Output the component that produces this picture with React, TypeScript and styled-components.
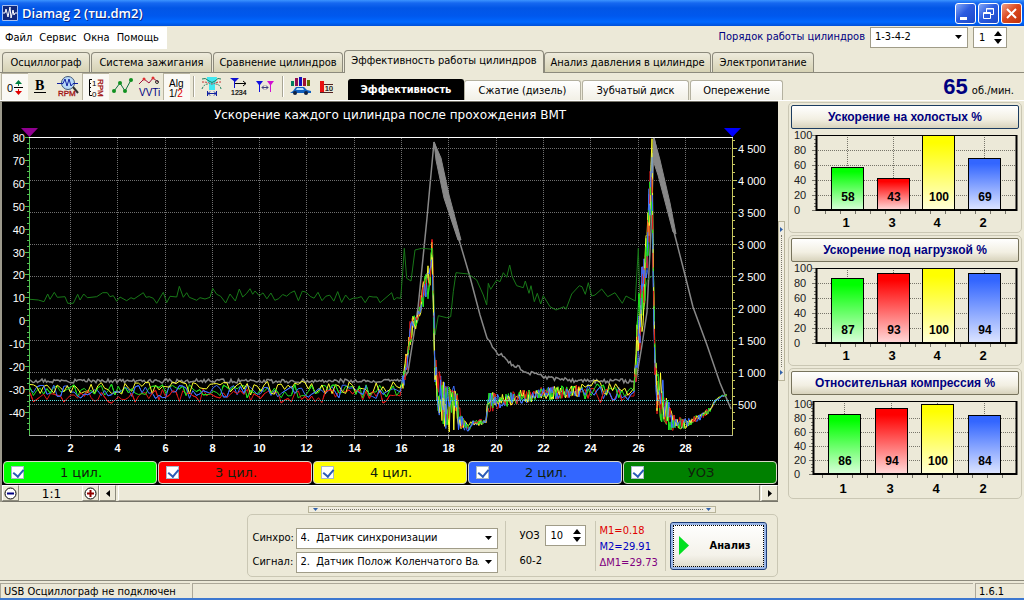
import React from 'react';
import styled, { createGlobalStyle, css } from 'styled-components';

const UI = "'DejaVu Sans Condensed', 'DejaVu Sans', sans-serif";
const WIDE = "'DejaVu Sans', sans-serif";
const ARIAL = "'Liberation Sans', Arial, sans-serif";
const FACE = '#ece9d8';

const GlobalStyle = createGlobalStyle`
  * { box-sizing: border-box; }
  body { margin: 0; background: ${FACE}; font: 11px/14px ${UI}; color: #000; }
  button, input, select { font: inherit; color: inherit; margin: 0; border-radius: 0; }
  svg { display: block; }
`;

const Window = styled.div`
  min-height: 100vh;
  display: flex;
  flex-direction: column;
`;

/* ---------- title and menu ---------- */

const TitleBar = styled.header`
  height: 26px;
  display: flex;
  align-items: center;
  gap: 4px;
  padding: 0 2px;
  background: linear-gradient(#3c94ff 0, #1668f0 3px, #0256e6 8px, #0058ee 16px, #0068ff 22px, #0050d8 26px);
`;

const Title = styled.h1`
  flex: 1;
  margin: 0;
  color: #fff;
  font: 600 13px/18px 'Open Sans', sans-serif;
  text-shadow: 1px 1px 0 #0a2a8c;
`;

const WindowButton = styled.button<{ $close?: boolean }>`
  width: 21px;
  height: 21px;
  padding: 0;
  border: 1px solid #fff;
  border-radius: 3px;
  background: ${p => (p.$close
    ? 'linear-gradient(135deg, #f0a088, #dc4a20 45%, #c03008)'
    : 'linear-gradient(135deg, #84a8f8, #2c5ce0 45%, #1c48c8)')};
`;

const WindowButtons = styled.div`
  display: flex;
  gap: 2px;
`;

const MenuRow = styled.div`
  height: 24px;
  display: flex;
  justify-content: space-between;
`;

const Menu = styled.nav`
  display: flex;
  align-items: center;
  gap: 7px;
  height: 22px;
  margin-top: 1px;
  padding: 0 8px 0 5px;
  background: #fff;
`;

const MenuItem = styled.button`
  padding: 0;
  border: 0;
  background: none;
`;

const OrderBox = styled.div`
  display: flex;
  align-items: center;
  gap: 5px;
  padding: 0 17px 2px 0;
`;

const OrderLabel = styled.label`
  color: #000080;
`;

const SelectBox = styled.div<{ $width: number }>`
  position: relative;
  width: ${p => p.$width}px;
  height: 21px;
  svg { position: absolute; right: 6px; top: 8px; pointer-events: none; }
`;

const Select = styled.select`
  appearance: none;
  width: 100%;
  height: 100%;
  padding: 0 18px 0 4px;
  border: 1px solid #a09c88;
  background: #fff;
  white-space: pre;
`;

const Spinner = styled.div<{ $width: number }>`
  display: flex;
  align-items: center;
  width: ${p => p.$width}px;
  height: 21px;
  padding-right: 4px;
  border: 1px solid #a09c88;
  background: #fff;
`;

const SpinInput = styled.input`
  flex: 1;
  min-width: 0;
  height: 17px;
  padding: 0 0 0 5px;
  border: 0;
  background: none;
`;

const SpinArrows = styled.div`
  display: flex;
  flex-direction: column;
  gap: 3px;
`;

const SpinButton = styled.button`
  padding: 0;
  border: 0;
  background: none;
`;

/* ---------- tabs and toolbar ---------- */

const TabRow = styled.div`
  height: 23px;
  display: flex;
  align-items: flex-end;
  padding-left: 2px;
  border-bottom: 1px solid #8c8a7c;
`;

const Tab = styled.button<{ $width: number; $active?: boolean }>`
  flex: 0 1 ${p => p.$width}px;
  height: 20px;
  margin-right: 1px;
  padding: 0;
  border: 1px solid #8c8a7c;
  border-bottom: 0;
  border-radius: 4px 4px 0 0;
  background: linear-gradient(#eeebdc, #d6d2b4);
  white-space: nowrap;
  ${p => p.$active && css`
    height: 23px;
    margin: 0 0 -1px;
    padding-bottom: 2px;
    background: ${FACE};
  `}
`;

const ToolRow = styled.div`
  height: 28px;
  display: flex;
  border-bottom: 1px solid #fff;
`;

const Tools = styled.div`
  display: flex;
  padding-left: 1px;
`;

const ToolButton = styled.button<{ $pressed?: boolean }>`
  width: 27px;
  height: 27px;
  padding: 1px;
  border: 0;
  background: ${p => (p.$pressed ? '#faf9f4' : 'none')};
  box-shadow: ${p => (p.$pressed ? 'inset 1px 1px 0 #b8b4a0' : 'none')};
`;

const ToolSeparator = styled.i`
  width: 2px;
  margin: 3px;
  border-left: 1px solid #a8a594;
  border-right: 1px solid #fff;
`;

const SubTabs = styled.div`
  display: flex;
  align-items: flex-end;
  margin-left: 7px;
`;

const SubTab = styled.button<{ $width: number; $active?: boolean }>`
  width: ${p => p.$width}px;
  height: 20px;
  margin-right: 1px;
  padding: 0;
  border: 1px solid #b4b1a0;
  border-bottom: 0;
  border-radius: 3px 3px 0 0;
  background: linear-gradient(#fff, #f2f0e6);
  ${p => p.$active && css`
    height: 21px;
    margin-right: 0;
    border-color: #000;
    background: #000;
    color: #fff;
    font-weight: bold;
  `}
`;

const Speed = styled.p`
  flex: 1;
  margin: 0;
  padding-right: 10px;
  text-align: right;
  line-height: 27px;
  b { font: bold 22px/27px ${ARIAL}; color: #000080; margin-right: 4px; }
`;

/* ---------- main area ---------- */

const Main = styled.main`
  flex: 1;
  display: flex;
  align-items: flex-start;
  padding: 0 2px 0 0;
`;

const Scope = styled.section`
  flex: 1;
  min-width: 0;
  border-top: 1px solid #77756a;
  border-left: 2px solid #9c9a8c;
`;

const Screen = styled.div`
  background: #000;
  padding-bottom: 1px;
`;

const Plot = styled.svg`
  width: 100%;
  height: auto;
`;

const Legend = styled.div`
  display: grid;
  grid-template-columns: repeat(5, 1fr);
  gap: 1px;
  padding: 2px 1px 0;
`;

const LegendItem = styled.label<{ $color: string }>`
  display: flex;
  align-items: center;
  height: 23px;
  padding: 0 18px 0 7px;
  border: 1px solid #d8d8c8;
  border-radius: 4px;
  background: ${p => p.$color};
  font: 13px/16px ${WIDE};
  color: #10200c;
  span { flex: 1; text-align: center; }
`;

const Check = styled.input`
  appearance: none;
  width: 13px;
  height: 13px;
  border: 1px solid #a8b8c8;
  background: #fff;
  &:checked::after {
    content: '';
    display: block;
    width: 5px;
    height: 8px;
    margin: 0 0 0 3px;
    border: solid #2c5cb8;
    border-width: 0 2px 2px 0;
    transform: rotate(40deg);
  }
`;

const ScrollRow = styled.div`
  display: flex;
  height: 17px;
  border-bottom: 1px solid #77756a;
`;

const FlatButton = styled.button`
  display: grid;
  place-items: center;
  width: 17px;
  padding: 0;
  border: 1px solid;
  border-color: #fff #8c8a7c #8c8a7c #fff;
  background: ${FACE};
`;

const Ratio = styled.output`
  width: 63px;
  padding-left: 2px;
  border-top: 1px solid #fff;
  text-align: center;
  font: 12px/17px ${WIDE};
`;

const Track = styled.div`
  flex: 1;
  margin: 0 1px 0 2px;
  border: 1px solid;
  border-color: #fff #8c8a7c #aca899 #fff;
`;

const SideGrip = styled.div`
  width: 10px;
  display: flex;
  align-self: stretch;
  align-items: flex-start;
  padding-top: 120px;
`;

const GripBar = styled.button<{ $vertical?: boolean }>`
  display: flex;
  align-items: center;
  justify-content: space-between;
  flex-direction: ${p => (p.$vertical ? 'column' : 'row')};
  width: ${p => (p.$vertical ? '7px' : '408px')};
  height: ${p => (p.$vertical ? '160px' : '7px')};
  padding: ${p => (p.$vertical ? '5px 0' : '0 4px')};
  border: 1px solid #b8b49a;
  background: #f0ede0;
  i {
    flex: 1;
    margin: 3px;
    border: 0 dotted #77756a;
    border-width: ${p => (p.$vertical ? '0 0 0 1px' : '1px 0 0')};
  }
`;

const Side = styled.aside`
  width: 234px;
  display: flex;
  flex-direction: column;
  gap: 2px;
  padding-top: 1px;
`;

const Card = styled.section`
  padding: 2px;
  border: 1px solid #cac7b4;
  border-radius: 5px;
`;

const CardButton = styled.button<{ $focus?: boolean }>`
  display: block;
  width: 100%;
  height: 24px;
  padding: 0;
  border: 1px solid ${p => (p.$focus ? '#1c3c60' : '#77735c')};
  border-radius: 2px;
  background: linear-gradient(#fff, #f2efe2 60%, #d8d3bc);
  font: bold 12px/16px ${ARIAL};
  color: #000080;
`;

/* ---------- bottom ---------- */

const Bottom = styled.section`
  display: flex;
  flex-direction: column;
  align-items: center;
  gap: 1px;
  padding: 4px 0 3px;
  border-bottom: 1px solid #8c8a7c;
`;

const Group = styled.div`
  display: flex;
  align-items: center;
  width: 531px;
  height: 63px;
  padding: 0 10px 0 5px;
  border: 1px solid #cac7b4;
  border-radius: 5px;
`;

const Fields = styled.div`
  display: grid;
  grid-template-columns: 43px auto;
  align-items: center;
  row-gap: 3px;
  margin-right: 7px;
  padding-top: 9px;
`;

const Divider = styled.i`
  width: 1px;
  height: 50px;
  background: #cac7b4;
`;

const Angle = styled.div`
  flex: 1;
  padding: 5px 9px 0 14px;
`;

const AngleRow = styled.div`
  display: flex;
  align-items: center;
  justify-content: space-between;
  height: 25px;
`;

const Marks = styled.div`
  width: 69px;
  padding: 3px 0 0 4px;
  line-height: 16px;
`;

const Mark = styled.div<{ $color: string }>`
  color: ${p => p.$color};
`;

const Analyze = styled.button`
  display: flex;
  align-items: center;
  gap: 21px;
  width: 97px;
  height: 48px;
  margin-left: 4px;
  padding: 0 0 0 8px;
  border: 1px solid #1c3c78;
  border-radius: 3px;
  outline: 1px dotted #000;
  outline-offset: -4px;
  background: linear-gradient(#fff, #f4f2ea 70%, #dcd8c8);
  box-shadow: inset 0 0 0 2px #9cb8e8;
  font-weight: bold;
`;

const StatusBar = styled.footer`
  display: flex;
  gap: 2px;
  height: 19px;
  padding-top: 2px;
  border-bottom: 2px solid #3c78d0;
`;

const StatusCell = styled.div<{ $width?: number }>`
  flex: ${p => (p.$width ? `0 0 ${p.$width}px` : 1)};
  padding-left: 3px;
  border: 1px solid #aca899;
  border-width: 1px 0 0 1px;
  line-height: 15px;
  white-space: nowrap;
`;

/* ---------- small drawings ---------- */

const Arrow = ({ d, w = 7, h = 4, fill = '#000' }: { d: string; w?: number; h?: number; fill?: string }) => (
  <svg width={w} height={h} viewBox={`0 0 ${w} ${h}`} aria-hidden="true"><path d={d} fill={fill} /></svg>
);
const DOWN = 'M0 0H7L3.5 4Z';

const Icon = ({ children }: { children: React.ReactNode }) => (
  <svg width="25" height="25" viewBox="0 0 25 25" fill="none" aria-hidden="true">{children}</svg>
);

const OffsetIcon = () => (
  <Icon>
    <text x="5" y="18" fontFamily={ARIAL} fontSize="11" fill="#000">0</text>
    <path d="M12 13.500H21" stroke="#000" />
    <path d="M13 10L16.500 6L20 10ZM16 10h1v2h-1z" fill="#008040" />
    <path d="M13 17L16.500 21L20 17ZM16 15h1v2h-1z" fill="#e00000" />
  </Icon>
);
const BoldIcon = () => (
  <Icon>
    <text x="6" y="16" fontFamily="'Liberation Serif', serif" fontWeight="bold" fontSize="14" fill="#000">B</text>
    <path d="M5 18H17V19H5Z" fill="#000" />
  </Icon>
);
const RpmIcon = () => (
  <Icon>
    <circle cx="12" cy="9" r="6.500" fill="#b8d8f8" stroke="#405878" />
    <path d="M1 9.500H7L9 5L11 12L13 5L15 12L17 9.500H22" stroke="#1020a0" />
    <path d="M17 13L22 19" stroke="#303030" strokeWidth="2" />
    <text x="2" y="22" fontFamily={ARIAL} fontSize="8" fill="#a01010" stroke="#a01010" strokeWidth=".3">RPM</text>
  </Icon>
);
const ScaleIcon = () => (
  <Icon>
    <path d="M9 5.500H6.500V21.500H9M6 9.500H8M6 13.500H8M6 17.500H8" stroke="#000" />
    <text x="9" y="12" fontFamily={ARIAL} fontSize="8" fill="#000">1</text>
    <text x="9" y="23" fontFamily={ARIAL} fontSize="8" fill="#000">0</text>
    <text transform="translate(15 5) rotate(90)" fontFamily={ARIAL} fontSize="8" fill="#a01010" stroke="#a01010" strokeWidth=".3">RPM</text>
  </Icon>
);
const PointsIcon = () => (
  <Icon>
    <path d="M4 17L10 9L15 17L21 6" stroke="#107040" />
    {[[4, 17], [10, 9], [15, 17], [21, 6]].map(([x, y]) => <circle key={x} cx={x} cy={y} r="2" fill="#109020" />)}
  </Icon>
);
const VvtiIcon = () => (
  <Icon>
    <path d="M2 10L7 5L12 9L16 4L21 8" stroke="#a01040" />
    <circle cx="7" cy="5" r="1.500" fill="#e03030" /><circle cx="16" cy="4" r="1.500" fill="#e03030" />
    <circle cx="20" cy="8" r="1.500" stroke="#303030" />
    <text x="2" y="22" fontFamily={ARIAL} fontSize="10" fill="#000080">VVTi</text>
  </Icon>
);
const AlgIcon = () => (
  <Icon>
    <text x="5" y="13" fontFamily={ARIAL} fontSize="10" fill="#000">Alg</text>
    <text x="5" y="23" fontFamily={ARIAL} fontSize="10" fill="#000">1/<tspan fill="#e00000">2</tspan></text>
  </Icon>
);
const CoilIcon = () => (
  <Icon>
    <path d="M8 3H18Q18 7 16 9V16H10V9Q7 7 8 3Z" fill="#40e8f0" />
    <path d="M3 5Q6 3 10 7Q13 10 16 7Q19 3 22 5" stroke="#208060" />
    <path d="M3 8Q8 8 10 9Q13 11 16 9Q18 8 22 8" stroke="#c03030" strokeDasharray="2 1" />
    <path d="M3 15Q5 10 9 10M22 15Q21 10 16 10" stroke="#208060" strokeDasharray="2 1" />
    <path d="M8.500 17V22M17.500 17V22M9 19.500H17M11 17.500L9 19.500L11 21.500M15 17.500L17 19.500L15 21.500" stroke="#1020a0" />
  </Icon>
);
const FlagCountIcon = () => (
  <Icon>
    <path d="M4 4H13L9 8ZM8 7h1v7h-1z" fill="#1010d0" />
    <path d="M9 9.500H20M17 7L20 9.500L17 12" stroke="#000" />
    <text x="5" y="21" fontFamily={ARIAL} fontSize="7" fill="#000" stroke="#000" strokeWidth=".2">1234</text>
  </Icon>
);
const FlagPairIcon = () => (
  <Icon>
    <path d="M3 7H10L7 11V18H6V11Z" fill="#1010e0" />
    <path d="M14 7H21L18 11V18H17V11Z" fill="#d010d0" />
    <path d="M9 13.500H15M11 11.500L9 13.500L11 15.500M13 11.500L15 13.500L13 15.500" stroke="#404080" />
  </Icon>
);
const CarBarsIcon = () => (
  <Icon>
    <path d="M3 7h3v5h-3z" fill="#008060" /><path d="M7 4h3v8h-3z" fill="#901050" />
    <path d="M11 3h3v9h-3z" fill="#1010c0" /><path d="M15 4h3v8h-3z" fill="#a01030" />
    <path d="M19 6h3v6h-3z" fill="#607000" />
    <path d="M2 19L5 17L8 13H16L19 16L23 17V19Z" fill="#1060c0" />
    <circle cx="7" cy="19" r="2" fill="#102040" /><circle cx="18" cy="19" r="2" fill="#102040" />
    <path d="M9 14H15L16 16H8Z" fill="#b0e0ff" />
  </Icon>
);
const BarTenIcon = () => (
  <Icon>
    <path d="M5 7h4v11h-4z" fill="#e81010" />
    <path d="M5 18.500H18M9 10.500H18" stroke="#502020" />
    <text x="10" y="17" fontFamily={ARIAL} fontSize="7" fill="#000" stroke="#000" strokeWidth=".2">10</text>
  </Icon>
);

/* ---------- main chart ---------- */

type P = [number, number];
type N = [number, number, number];

const rng = (seed: number) => () => {
  seed = (seed * 1664525 + 1013904223) % 4294967296;
  return seed / 4294967296;
};

const toPath = (pts: P[]) => 'M' + pts.map(([x, y]) => `${x.toFixed(1)} ${y.toFixed(1)}`).join('L');

/* Walks along key points [x, y, amplitude] adding jitter of that amplitude. */
const noisy = (keys: N[], step: number, seed: number): P[] => {
  const r = rng(seed);
  const out: P[] = [];
  for (let i = 0; i < keys.length - 1; i++) {
    const [x0, y0, a0] = keys[i];
    const [x1, y1, a1] = keys[i + 1];
    const n = Math.max(1, Math.round((x1 - x0) / step));
    for (let k = 0; k < n; k++) {
      const t = k / n;
      const a = a0 + (a1 - a0) * t;
      out.push([x0 + (x1 - x0) * t, y0 + (y1 - y0) * t + (r() * 2 - 1) * a]);
    }
  }
  const last = keys[keys.length - 1];
  out.push([last[0], last[1]]);
  return out;
};

const cylinder = (color: string, seed: number, base: number, peak1: number, peak2: number) => {
  const idle = noisy([[30, base, 7], [400, base, 7]], 3.4, seed);
  const run = noisy([
    [402, 386, 7], [405, 372, 12], [407, 358, 12], [410, 335, 14], [413, 322, 8], [417, 323, 6], [422, 296, 14],
    [427, 288, 18], [430, 266, 22], [432, peak1, 2], [434, 300, 50], [435, 370, 14],
    [438, 390, 24], [442, 402, 25], [447, 410, 24], [456, 408, 22], [461, 422, 8],
    [467, 428, 4], [473, 424, 4], [486, 421, 2], [488, 402, 12], [500, 402, 8], [512, 398, 7],
    [540, 394, 7], [580, 391, 6],
  ], 1.2, seed + 7);
  const cruise = noisy([[582, base, 8], [634, base, 8]], 3, seed + 13);
  const end = noisy([
    [635, 375, 14], [637, 345, 30], [641, 306, 40], [645, 275, 30], [648, 230, 28],
    [650, 205, 34], [652, peak2, 2], [653, 270, 40], [655, 370, 14], [657, 390, 24], [664, 404, 25],
    [670, 417, 18], [674, 422, 7], [684, 424, 5], [692, 421, 4], [701, 417, 3], [710, 409, 3],
    [716, 400, 1], [722, 396, 1], [727, 395, 0],
  ], 1.1, seed + 23);
  return { color, d: toPath([...idle, ...run, ...cruise, ...end]) };
};

const traces = [
  cylinder('#e01818', 51, 396, 241, 180),
  cylinder('#20e020', 17, 391, 250, 200),
  cylinder('#4070ff', 91, 392, 255, 155),
  cylinder('#ffff30', 33, 388, 243, 140),
];

const advance: P[] = [
  ...([[90, 523], [115, 525], [132, 530], [143, 507], [150, 523], [163, 502], [172, 517], [195, 515], [203, 535],
    [220, 535], [233, 508], [240, 525], [251, 507], [262, 518], [290, 515], [308, 503], [322, 503], [330, 515],
    [340, 512], [350, 529], [360, 516], [380, 527], [393, 518], [402, 522], [430, 503], [438, 517], [448, 515],
    [460, 520], [470, 535], [490, 502], [500, 533], [510, 514], [530, 516], [538, 484], [550, 517], [560, 503],
    [568, 517], [590, 526], [600, 518], [615, 522], [630, 517], [638, 490], [650, 508], [662, 514], [677, 534],
    [690, 507], [706, 528], [718, 492], [728, 516], [740, 505], [750, 491], [758, 508], [765, 498], [778, 512],
  ] as P[]).map(([x, y]): P => [x / 3, 125 + y / 3]),
  ...noisy([[263, 296, 6], [377, 297, 6]], 4, 5),
  ...([[0, 533], [35, 503], [42, 525], [50, 518], [62, 520], [68, 440], [73, 370], [80, 460], [93, 468], [105, 375],
    [125, 370], [150, 372], [158, 375], [165, 630], [175, 572], [200, 578], [212, 575], [220, 500], [228, 443],
    [265, 447], [290, 465], [310, 510], [320, 540], [325, 475], [332, 493], [350, 465], [360, 470], [370, 443],
    [380, 457], [389, 420], [397, 455], [410, 482], [430, 488], [436, 468], [447, 505], [453, 482], [463, 530],
    [472, 505], [482, 537], [490, 512], [510, 545], [528, 555], [552, 545], [558, 553], [575, 507], [598, 482],
    [606, 485], [616, 508], [625, 473], [635, 513], [645, 510], [665, 492], [683, 515], [705, 503], [727, 535],
    [738, 513], [766, 528], [775, 370], [780, 520], [790, 520], [802, 465], [820, 450],
  ] as P[]).map(([x, y]): P => [380 + x / 3, 125 + y / 3]),
];

const rpm = toPath([
  ...noisy([[30, 381, 2], [402, 381, 2]], 1.5, 3),
  [408, 372], [413, 340], [418, 308], [423, 258], [427, 218], [430, 185], [434, 142],
  [444, 175], [450, 212], [460, 243], [470, 277], [480, 315], [487, 338],
  ...noisy([[488, 340, 1], [497, 352, 2], [513, 365, 2], [530, 373, 2], [547, 378, 2], [580, 381, 2], [636, 381, 2]], 1.5, 8),
  [642, 345], [647, 312], [651, 230], [654, 138], [674, 232], [685, 275], [693, 307], [707, 345], [720, 383], [731, 409],
]);

const xOf = (t: number) => Math.round(22.7 + 23.65 * t) + 0.5;
const yLeft = (v: number) => Math.round(320.3 - 2.292 * v) + 0.5;
const yRight = (v: number) => Math.round(436 - 0.064 * v) + 0.5;
const range = (from: number, to: number, step: number) =>
  Array.from({ length: Math.floor((to - from) / step) + 1 }, (_, i) => from + i * step);

const MainChart = () => (
  <Plot viewBox="2 102 776 357" role="img" aria-label="Ускорение каждого цилиндра">
    <text x="390" y="119" textAnchor="middle" fill="#fff" fontFamily={WIDE} fontSize="12">Ускорение каждого цилиндра после прохождения ВМТ</text>
    <path d="M21 128H38L29.500 137Z" fill="#900090" />
    <path d="M724 128H741L732.500 137Z" fill="#0000ff" />
    <g stroke="#707070" strokeDasharray="1 1">
      {range(2, 28, 2).map(t => <path key={t} d={`M${xOf(t)} 138V435`} />)}
      {range(500, 4500, 500).map(v => <path key={v} d={`M30 ${yRight(v)}H732`} />)}
    </g>
    <g stroke="#a0a0a0">
      {range(1, 29, 0.5).map(t => <path key={t} d={`M${xOf(t)} 435v${t % 2 ? 2 : 4}`} />)}
    </g>
    <g stroke="#50c050">
      {range(-47.5, 80, 2.5).map(v => <path key={v} d={`M${v % 10 ? 27 : 25} ${yLeft(v)}H29`} />)}
      <path d="M29.500 138V435" />
    </g>
    <g stroke="#c8c860">
      {range(125, 4625, 125).map(v => <path key={v} d={`M733 ${yRight(v)}h${v % 500 ? 2 : 4}`} />)}
      <path d="M732.500 138V435" />
    </g>
    <path d="M29 137.500H733" stroke="#fff" />
    <path d="M29 435.500H733" stroke="#b0b0b0" />
    <path d={rpm} stroke="#888" fill="none" strokeWidth="1.500" />
    <path d="M434 142L441 158L449 195L461 240L458 240L444 198L436 160ZM654 138L660 160L670 203L676 234L673 232L658 175L653 160Z" fill="#888" stroke="#888" />
    <path d={toPath(advance)} stroke="#187818" fill="none" />
    {traces.map(t => <path key={t.color} d={t.d} stroke={t.color} fill="none" strokeLinejoin="bevel" />)}
    {traces.slice(0, 3).map((t, i) => (
      <path key={t.color} d={t.d} stroke={t.color} fill="none" strokeLinejoin="bevel" strokeDasharray="16 22" strokeDashoffset={i * 13} />
    ))}
    <path d="M30 400.500H732" stroke="#60e8e8" strokeDasharray="1 1" />
    <g fill="#fff" fontFamily={ARIAL} fontSize="11" textAnchor="end">
      {range(-40, 80, 10).map(v => <text key={v} x="25" y={yLeft(v) + 4}>{v}</text>)}
    </g>
    <g fill="#fff" fontFamily={ARIAL} fontSize="11">
      {range(500, 4500, 500).map(v => (
        <text key={v} x="738" y={yRight(v) + 4}>{v >= 1000 ? `${Math.floor(v / 1000)} ${String(v % 1000).padStart(3, '0')}` : v}</text>
      ))}
    </g>
    <g fill="#fff" fontFamily={ARIAL} fontSize="11" fontWeight="bold" textAnchor="middle">
      {range(2, 28, 2).map(t => <text key={t} x={xOf(t)} y="452">{t}</text>)}
    </g>
  </Plot>
);

/* ---------- bar charts ---------- */

const BAR_COLORS = [['#00ff00', '#d8ffd8'], ['#ff0000', '#ffd8d8'], ['#ffff00', '#ffffd8'], ['#3366ff', '#dce4ff']];
const BAR_NAMES = ['1', '3', '4', '2'];

interface BarsProps { id: string; values: number[]; left: number; top: number; zero: number; hundred: number; centers: number[] }

const Bars = ({ id, values, left, top, zero, hundred, centers }: BarsProps) => {
  const y = (v: number) => Math.round(zero - ((zero - hundred) * v) / 100);
  return (
    <Plot viewBox="0 0 228 101" role="img" aria-label={values.join(', ')}>
      <defs>
        {BAR_COLORS.map(([a, b], i) => (
          <linearGradient key={a} id={`${id}${i}`} x1="0" y1="0" x2="0" y2="1">
            <stop offset=".1" stopColor={a} /><stop offset="1" stopColor={b} />
          </linearGradient>
        ))}
      </defs>
      <g stroke="#77756a" strokeDasharray="1 1">
        {[20, 40, 60, 80].map(v => <path key={v} d={`M${left} ${y(v) + 0.5}H225`} />)}
        {centers.map(x => <path key={x} d={`M${x + 0.5} ${top}V${zero}`} />)}
      </g>
      <g stroke="#77756a">
        {range(0, 100, 5).map(v => <path key={v} d={`M${v % 20 ? left - 2 : left - 4} ${y(v) + 0.5}H${left}`} />)}
        {range(0, 12, 1).map(k => <path key={k} d={`M${left + 9 + k * 15 + 0.5} ${zero}v4`} />)}
      </g>
      <path d={`M${left} ${top + 0.5}H225`} stroke="#000" />
      <path d={`M${left + 0.5} ${top}V${zero}H225.5V${top}`} stroke="#000" strokeWidth="2" fill="none" />
      {values.map((v, i) => (
        <g key={i}>
          <rect x={centers[i] - 15.5} y={y(v) + 0.5} width="32" height={zero - y(v) - 1} fill={`url(#${id}${i})`} stroke="#000" />
          <text x={centers[i] + 1} y={zero - 9} textAnchor="middle" fontFamily={ARIAL} fontWeight="bold" fontSize="12">{v}</text>
          <text x={centers[i] - 1} y="98" textAnchor="middle" fontFamily={ARIAL} fontWeight="bold" fontSize="13">{BAR_NAMES[i]}</text>
        </g>
      ))}
      <g fontFamily={ARIAL} fontSize="11" fill="#202020">
        {range(0, 100, 20).map(v => <text key={v} x="3" y={y(v) + 4}>{v}</text>)}
      </g>
    </Plot>
  );
};

const CENTERS = [56, 102, 147, 193];

const SpinPair = () => (
  <SpinArrows>
    <SpinButton aria-label="Больше"><Arrow d="M0 5H8L4 0Z" w={8} h={5} /></SpinButton>
    <SpinButton aria-label="Меньше"><Arrow d="M0 0H8L4 5Z" w={8} h={5} /></SpinButton>
  </SpinArrows>
);

const LEGEND = [['1 цил.', '#00ff00'], ['3 цил.', '#ff0000'], ['4 цил.', '#ffff00'], ['2 цил.', '#3366ff'], ['УОЗ', '#008000']];

export default function App() {
  return (
    <Window>
      <GlobalStyle />
      <TitleBar>
        <svg width="16" height="16" viewBox="0 0 16 16" aria-hidden="true">
          <path d="M0 0H16V16H0Z" fill="#10287c" />
          <path d="M.500.500H15.500V15.500H.500Z" fill="none" stroke="#a8c0f0" />
          <path d="M1 8H3L4 4L6 12L8 2L9 13L11 5L12 10L13 8H15" fill="none" stroke="#fff" />
        </svg>
        <Title>Diamag 2 (тш.dm2)</Title>
        <WindowButtons>
          <WindowButton aria-label="Свернуть">
            <svg width="19" height="19" viewBox="0 0 19 19"><path d="M4 13H11V16H4Z" fill="#fff" /></svg>
          </WindowButton>
          <WindowButton aria-label="Восстановить">
            <svg width="19" height="19" viewBox="0 0 19 19" fill="none" stroke="#fff"><path d="M7.500 8V4.500H14.500V10.500H12M7 5H15M4.500 8.500H11.500V14.500H4.500ZM4 9.500H12" /></svg>
          </WindowButton>
          <WindowButton $close aria-label="Закрыть">
            <svg width="19" height="19" viewBox="0 0 19 19"><path d="M5 5L14 14M14 5L5 14" stroke="#fff" strokeWidth="2" /></svg>
          </WindowButton>
        </WindowButtons>
      </TitleBar>

      <MenuRow>
        <Menu>
          {['Файл', 'Сервис', 'Окна', 'Помощь'].map(m => <MenuItem key={m}>{m}</MenuItem>)}
        </Menu>
        <OrderBox>
          <OrderLabel htmlFor="order">Порядок работы цилиндров</OrderLabel>
          <SelectBox $width={98}>
            <Select id="order"><option>1-3-4-2</option></Select>
            <Arrow d={DOWN} />
          </SelectBox>
          <Spinner $width={34}><SpinInput aria-label="Номер" defaultValue="1" /><SpinPair /></Spinner>
        </OrderBox>
      </MenuRow>

      <TabRow role="tablist">
        <Tab role="tab" $width={88}>Осциллограф</Tab>
        <Tab role="tab" $width={121}>Система зажигания</Tab>
        <Tab role="tab" $width={130}>Сравнение цилиндров</Tab>
        <Tab role="tab" aria-selected $active $width={200}>Эффективность работы цилиндров</Tab>
        <Tab role="tab" $width={167}>Анализ давления в цилиндре</Tab>
        <Tab role="tab" $width={102}>Электропитание</Tab>
      </TabRow>

      <ToolRow>
        <Tools>
          <ToolButton $pressed aria-label="Смещение"><OffsetIcon /></ToolButton>
          <ToolButton aria-label="Толщина"><BoldIcon /></ToolButton>
          <ToolButton aria-label="Обороты"><RpmIcon /></ToolButton>
          <ToolButton $pressed aria-label="Шкала"><ScaleIcon /></ToolButton>
          <ToolButton aria-label="Точки"><PointsIcon /></ToolButton>
          <ToolButton aria-label="VVTi"><VvtiIcon /></ToolButton>
          <ToolButton $pressed aria-label="Алгоритм"><AlgIcon /></ToolButton>
          <ToolSeparator />
          <ToolButton aria-label="Диск"><CoilIcon /></ToolButton>
          <ToolButton aria-label="Нумерация"><FlagCountIcon /></ToolButton>
          <ToolButton aria-label="Маркеры"><FlagPairIcon /></ToolButton>
          <ToolSeparator />
          <ToolButton aria-label="Динамика"><CarBarsIcon /></ToolButton>
          <ToolButton aria-label="Компрессия"><BarTenIcon /></ToolButton>
        </Tools>
        <SubTabs role="tablist">
          <SubTab role="tab" aria-selected $active $width={116}>Эффективность</SubTab>
          <SubTab role="tab" $width={117}>Сжатие (дизель)</SubTab>
          <SubTab role="tab" $width={107}>Зубчатый диск</SubTab>
          <SubTab role="tab" $width={93}>Опережение</SubTab>
        </SubTabs>
        <Speed><b>65</b>об./мин.</Speed>
      </ToolRow>

      <Main>
        <Scope>
          <Screen>
            <MainChart />
            <Legend>
              {LEGEND.map(([name, color]) => (
                <LegendItem key={name} $color={color}>
                  <Check type="checkbox" defaultChecked />
                  <span>{name}</span>
                </LegendItem>
              ))}
            </Legend>
          </Screen>
          <ScrollRow>
            <FlatButton aria-label="Уменьшить">
              <svg width="13" height="13" viewBox="0 0 13 13" fill="none"><circle cx="6.500" cy="6.500" r="5.500" stroke="#000" fill="#fff" /><path d="M3 6.500H10" stroke="#000080" strokeWidth="2" /></svg>
            </FlatButton>
            <Ratio>1:1</Ratio>
            <FlatButton aria-label="Увеличить">
              <svg width="13" height="13" viewBox="0 0 13 13" fill="none"><circle cx="6.500" cy="6.500" r="5.500" stroke="#000" fill="#fff" /><path d="M3 6.500H10M6.500 3V10" stroke="#900000" strokeWidth="2" /></svg>
            </FlatButton>
            <FlatButton aria-label="Влево"><Arrow d="M4 0V7L0 3.500Z" w={4} h={7} /></FlatButton>
            <Track />
            <FlatButton aria-label="Вправо"><Arrow d="M0 0V7L4 3.500Z" w={4} h={7} /></FlatButton>
          </ScrollRow>
        </Scope>
        <SideGrip>
          <GripBar $vertical aria-label="Панель справа">
            <Arrow d="M0 0V5L3 2.500Z" w={3} h={5} fill="#3060a8" /><i /><Arrow d="M0 0V5L3 2.500Z" w={3} h={5} fill="#3060a8" />
          </GripBar>
        </SideGrip>
        <Side>
          <Card>
            <CardButton $focus>Ускорение на холостых %</CardButton>
            <Bars id="idle" values={[58, 43, 100, 69]} left={25} top={6} zero={81} hundred={6} centers={CENTERS} />
          </Card>
          <Card>
            <CardButton>Ускорение под нагрузкой %</CardButton>
            <Bars id="load" values={[87, 93, 100, 94]} left={25} top={6} zero={81} hundred={6} centers={CENTERS} />
          </Card>
          <Card>
            <CardButton>Относительная компрессия %</CardButton>
            <Bars id="comp" values={[86, 94, 100, 84]} left={22} top={6} zero={79} hundred={9} centers={[53, 100, 146, 193]} />
          </Card>
        </Side>
      </Main>

      <Bottom>
        <GripBar aria-label="Панель снизу">
          <Arrow d="M0 0H5L2.500 3Z" w={5} h={3} fill="#3060a8" /><i /><Arrow d="M0 0H5L2.500 3Z" w={5} h={3} fill="#3060a8" />
        </GripBar>
        <Group>
          <Fields>
            <label htmlFor="sync">Синхро:</label>
            <SelectBox $width={202}>
              <Select id="sync"><option>{'4.\u00a0 Датчик синхронизации'}</option></Select>
              <Arrow d={DOWN} />
            </SelectBox>
            <label htmlFor="signal">Сигнал:</label>
            <SelectBox $width={202}>
              <Select id="signal"><option>{'2.\u00a0 Датчик Полож Коленчатого Вал'}</option></Select>
              <Arrow d={DOWN} />
            </SelectBox>
          </Fields>
          <Divider />
          <Angle>
            <AngleRow>
              <label htmlFor="angle">УОЗ</label>
              <Spinner $width={41}><SpinInput id="angle" defaultValue="10" /><SpinPair /></Spinner>
            </AngleRow>
            <AngleRow>60-2</AngleRow>
          </Angle>
          <Divider />
          <Marks>
            <Mark $color="#e00000">M1=0.18</Mark>
            <Mark $color="#0000c0">M2=29.91</Mark>
            <Mark $color="#800080">ΔM1=29.73</Mark>
          </Marks>
          <Divider />
          <Analyze><Arrow d="M0 0V19L10 9.500Z" w={10} h={19} fill="#00e020" />Анализ</Analyze>
        </Group>
      </Bottom>

      <StatusBar>
        <StatusCell $width={190}>USB Осциллограф не подключен</StatusCell>
        <StatusCell />
        <StatusCell $width={49}>1.6.1</StatusCell>
      </StatusBar>
    </Window>
  );
}
